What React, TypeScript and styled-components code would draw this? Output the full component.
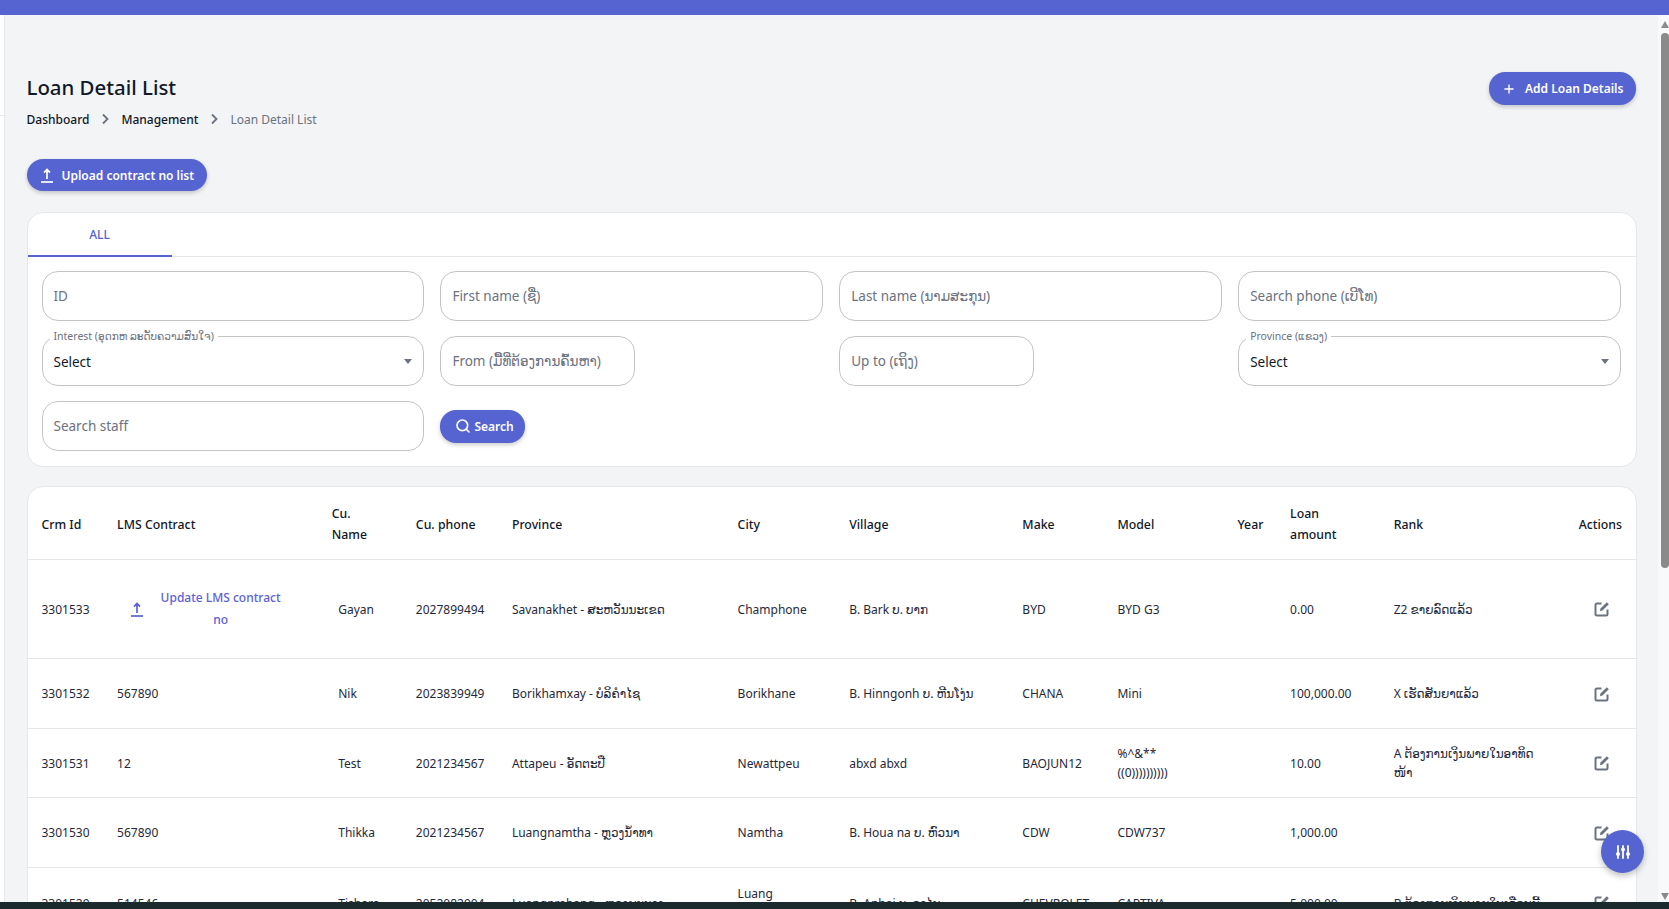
import React from "react";
import styled, { createGlobalStyle } from "styled-components";
import { Search, Plus } from "lucide-react";

const BRAND = "#5564d1";
const FONT = `"Noto Sans", "DejaVu Sans", sans-serif`;

const Global = createGlobalStyle`
  html, body { margin: 0; padding: 0; height: 100%; overflow: hidden; background: #f3f4f6; }
  #root { height: 100%; }
  * { box-sizing: border-box; }
  body { font-family: ${FONT}; color: #111827; }
`;

const Viewport = styled.div`
  width: 1669px; height: 909px; display: flex; flex-direction: column; overflow: hidden; position: relative;
`;
const TopBar = styled.div`height: 15px; background: ${BRAND}; flex: none;`;
const Middle = styled.div`flex: 1; min-height: 0; display: flex;`;
const Rail = styled.div`
  width: 5px; flex: none; background: #fff; border-right: 1px solid #e5e7eb; position: relative;
  &::after { content: ""; position: absolute; left: 0; right: 0; top: 100px; height: 1px; background: #e5e7eb; }
`;
const Main = styled.main`
  flex: 1; min-width: 0; overflow: hidden; padding: 57px 21px 0 21.5px; background: #f3f4f6;
`;
const Scrollbar = styled.div`
  width: 11px; flex: none; background: #f8f9fa; display: flex; flex-direction: column; align-items: flex-end; position: relative; padding-top: 18px;
`;
const Thumb = styled.div`width: 8px; height: 535px; background: #8a8a8a; border-radius: 4px;`;
const ArrowUp = styled.div`
  position: absolute; top: 6px; right: 0; width: 0; height: 0;
  border-left: 4px solid transparent; border-right: 4px solid transparent; border-bottom: 7px solid #8a8a8a;
`;
const ArrowDown = styled(ArrowUp)`
  top: auto; bottom: 2px; border-bottom: 0; border-top: 7px solid #8a8a8a;
`;
const BottomBar = styled.div`height: 7px; background: #1b2a2c; flex: none;`;

const Header = styled.div`display: flex; justify-content: space-between; align-items: flex-start;`;
const Title = styled.h1`margin: 0; font-size: 20.4px; line-height: 30px; font-weight: 500; color: #111827;`;
const Crumbs = styled.nav`display: flex; align-items: center; margin-top: 7px; height: 20px; font-size: 12px;`;
const Crumb = styled.span<{ $muted?: boolean }>`color: ${(p) => (p.$muted ? "#6b7280" : "#111827")}; font-weight: ${(p) => (p.$muted ? 400 : 500)};`;
const Chevron = styled.svg`width: 12px; height: 12px; margin: 0 10px; color: #6b7280;`;

const Btn = styled.button`
  display: inline-flex; align-items: center; border: 0; background: ${BRAND}; color: #fff; border-radius: 16px;
  font: 600 12px ${FONT}; box-shadow: 0 2px 4px rgba(0,0,0,.2); padding: 0; white-space: nowrap;
`;
const AddBtn = styled(Btn)`width: 147px; height: 33px; padding-left: 13px; gap: 9px; margin-right: 1px;`;
const UploadBtn = styled(Btn)`width: 180px; height: 32px; padding-left: 13px; gap: 8px; margin-top: 30px; display: flex;`;
const SearchBtn = styled(Btn)`width: 85px; height: 33px; padding-left: 15px; gap: 3px; align-self: center;`;

const Card = styled.section`
  background: #fff; border: 1px solid #e5e7eb; border-radius: 16px; overflow: hidden;
`;
const FilterCard = styled(Card)`margin-top: 21px; height: 255px;`;
const Tabs = styled.div`height: 44px; border-bottom: 1px solid #e5e7eb; display: flex;`;
const Tab = styled.div`
  width: 144px; height: 44px; display: flex; align-items: center; justify-content: center; padding-top: 1px;
  border-bottom: 2px solid ${BRAND}; color: ${BRAND}; font-size: 12px; font-weight: 500;
`;
const FilterGrid = styled.div`
  display: grid; grid-template-columns: repeat(4, 1fr); gap: 15px 16px; padding: 14px 15px 15px 14px;
`;
const Input = styled.div<{ $narrow?: boolean }>`
  height: 50px; border: 1px solid #c4c4c4; border-radius: 16px; display: flex; align-items: center; padding: 0 11px;
  font-size: 13.5px; color: #6b7280; background: #fff; width: ${(p) => (p.$narrow ? "195px" : "auto")};
`;
const SelectBox = styled.div`
  height: 50px; border: 1px solid #c4c4c4; border-radius: 16px; display: flex; align-items: center; justify-content: space-between;
  padding: 1px 11px 0; font-size: 13.5px; color: #111827; position: relative;
`;
const FloatLabel = styled.span`
  position: absolute; top: -7px; left: 7px; background: #fff; padding: 0 4px; font-size: 10.5px; line-height: 13px; color: #6b7280;
`;
const Caret = styled.span`
  width: 0; height: 0; border-left: 4.5px solid transparent; border-right: 4.5px solid transparent; border-top: 5px solid #6b7280;
`;

const TableCard = styled(Card)`margin-top: 19px;`;
const Table = styled.table`
  width: 100%; border-collapse: collapse; table-layout: fixed; font-size: 12px;
`;
const Th = styled.th`
  text-align: left; font-weight: 500; font-size: 12.3px; padding: 3px 14px 0; height: 72px; line-height: 21px; border-bottom: 1px solid #e5e7eb; color: #111827;
`;
const ThRight = styled(Th)`text-align: right; padding-left: 0;`;
const Tr = styled.tr<{ $h: number }>`height: ${(p) => p.$h}px;`;
const Td = styled.td`
  padding: 1px 14px 0; border-bottom: 1px solid #e5e7eb; color: #1f2937; line-height: 19px; font-weight: 400;
`;
const NameTd = styled(Td)`padding-left: 20.5px;`;
const ModelTd = styled(Td)`white-space: pre-line;`;
const ActionTd = styled(Td)`padding-right: 0;`;
const EditSvg = styled.svg`width: 16px; height: 16px; display: block; margin-left: 13px; color: #6b7280;`;
const LmsCell = styled.div`display: flex; align-items: center; color: #5b61d6; padding-left: 12.5px; gap: 9.5px;`;
const LmsText = styled.span`text-align: center; font-size: 12px; line-height: 22px; font-weight: 500; width: 135px;`;

const Fab = styled.button`
  position: absolute; left: 1601px; top: 830px; width: 43px; height: 43px; border: 0; border-radius: 50%; background: ${BRAND};
  box-shadow: 0 3px 6px rgba(0,0,0,.25); display: flex; align-items: center; justify-content: center; color: #fff; padding: 0;
`;

const UploadIcon = () => (
  <svg width={14} height={15} viewBox="0 0 14 15" fill="none" stroke="currentColor" strokeWidth="1.7">
    <path d="M7 11V1.5M4 4.6 7 1.4l3 3.2" />
    <path d="M1 14h12" />
  </svg>
);
const EditIcon = () => (
  <EditSvg viewBox="0 0 16 16" fill="none" stroke="currentColor" strokeWidth="2">
    <path d="M7.5 2.5H3a1.5 1.5 0 0 0-1.5 1.5v9A1.5 1.5 0 0 0 3 14.5h9a1.5 1.5 0 0 0 1.5-1.5V8.5" />
    <path d="M6.5 7.6 12.8 1.3l2 2-6.3 6.3-2.6.6z" fill="currentColor" stroke="none" />
  </EditSvg>
);
const TuneIcon = () => (
  <svg width="16" height="16" viewBox="0 0 16 16" fill="none" stroke="currentColor" strokeWidth="1.8" strokeLinecap="round">
    <path d="M3 2v12M8 2v12M13 2v12" />
    <circle cx="3" cy="10" r="2" fill="currentColor" stroke="none" />
    <circle cx="8" cy="5.5" r="2" fill="currentColor" stroke="none" />
    <circle cx="13" cy="10" r="2" fill="currentColor" stroke="none" />
  </svg>
);
const ChevronIcon = () => (
  <Chevron viewBox="0 0 12 12" fill="none" stroke="currentColor" strokeWidth="1.8"><path d="M4 1.5 8.5 6 4 10.5" /></Chevron>
);

const cols = [75.5, 214.5, 84, 96, 225.5, 111.5, 173, 95, 120, 52.5, 103.5, 187, 69];
const rows = [
  { h: 99, id: "3301533", lms: null, name: "Gayan", phone: "2027899494", prov: "Savanakhet - ສະຫວັນນະເຂດ", city: "Champhone", village: "B. Bark ບ. ບາກ", make: "BYD", model: "BYD G3", amt: "0.00", rank: "Z2 ຂາຍລົດແລ້ວ" },
  { h: 70, id: "3301532", lms: "567890", name: "Nik", phone: "2023839949", prov: "Borikhamxay - ບໍລິຄໍາໄຊ", city: "Borikhane", village: "B. Hinngonh ບ. ຫີນໂງ່ນ", make: "CHANA", model: "Mini", amt: "100,000.00", rank: "X ເຮັດສັນຍາແລ້ວ" },
  { h: 69, id: "3301531", lms: "12", name: "Test", phone: "2021234567", prov: "Attapeu - ອັດຕະປື", city: "Newattpeu", village: "abxd abxd", make: "BAOJUN12", model: "%^&**\n((0))))))))))", amt: "10.00", rank: "A ຕ້ອງການເງິນພາຍໃນອາທິດ ໜ້າ" },
  { h: 70, id: "3301530", lms: "567890", name: "Thikka", phone: "2021234567", prov: "Luangnamtha - ຫຼວງນໍ້າທາ", city: "Namtha", village: "B. Houa na ບ. ຫົວນາ", make: "CDW", model: "CDW737", amt: "1,000.00", rank: "" },
  { h: 71, id: "3301529", lms: "514546", name: "Tishara", phone: "2052082904", prov: "Luangprabang - ຫຼວງພະບາງ", city: "Luang Prabang", village: "B. Anhai ບ. ອາໄນ", make: "CHEVROLET", model: "CAPTIVA", amt: "5,000.00", rank: "B ຕ້ອງການເງິນພາຍໃນເດືອນນີ້" },
];

export default function App() {
  return (
    <Viewport>
      <Global />
      <TopBar />
      <Middle>
        <Rail />
        <Main>
          <Header>
            <div>
              <Title>Loan Detail List</Title>
              <Crumbs>
                <Crumb>Dashboard</Crumb>
                <ChevronIcon />
                <Crumb>Management</Crumb>
                <ChevronIcon />
                <Crumb $muted>Loan Detail List</Crumb>
              </Crumbs>
            </div>
            <AddBtn><Plus size={14} strokeWidth={2.4} />Add Loan Details</AddBtn>
          </Header>
          <UploadBtn><UploadIcon />Upload contract no list</UploadBtn>
          <FilterCard>
            <Tabs><Tab>ALL</Tab></Tabs>
            <FilterGrid>
              <Input>ID</Input>
              <Input>First name (ຊື່)</Input>
              <Input>Last name (ນາມສະກຸນ)</Input>
              <Input>Search phone (ເບີໂທ)</Input>
              <SelectBox>
                <FloatLabel>Interest (ອຸດກຫ ລະດັບຄວາມສົນໃຈ)</FloatLabel>
                Select<Caret />
              </SelectBox>
              <Input $narrow>From (ມື້ທີ່ຕ້ອງການຄົ້ນຫາ)</Input>
              <Input $narrow>Up to (ເຖິງ)</Input>
              <SelectBox>
                <FloatLabel>Province (ແຂວງ)</FloatLabel>
                Select<Caret />
              </SelectBox>
              <Input>Search staff</Input>
              <SearchBtn><Search size={16} strokeWidth={2.4} />Search</SearchBtn>
            </FilterGrid>
          </FilterCard>
          <TableCard>
            <Table>
              <colgroup>{cols.map((w, i) => <col key={i} style={{ width: w }} />)}</colgroup>
              <thead>
                <tr>
                  <Th>Crm Id</Th><Th>LMS Contract</Th><Th>Cu. Name</Th><Th>Cu. phone</Th><Th>Province</Th><Th>City</Th><Th>Village</Th>
                  <Th>Make</Th><Th>Model</Th><Th>Year</Th><Th>Loan amount</Th><Th>Rank</Th><ThRight>Actions</ThRight>
                </tr>
              </thead>
              <tbody>
                {rows.map((r) => (
                  <Tr key={r.id} $h={r.h}>
                    <Td>{r.id}</Td>
                    <Td>
                      {r.lms ?? (
                        <LmsCell><UploadIcon /><LmsText>Update LMS contract no</LmsText></LmsCell>
                      )}
                    </Td>
                    <NameTd>{r.name}</NameTd>
                    <Td>{r.phone}</Td>
                    <Td>{r.prov}</Td>
                    <Td>{r.city}</Td>
                    <Td>{r.village}</Td>
                    <Td>{r.make}</Td>
                    <ModelTd>{r.model}</ModelTd>
                    <Td />
                    <Td>{r.amt}</Td>
                    <Td>{r.rank}</Td>
                    <ActionTd><EditIcon /></ActionTd>
                  </Tr>
                ))}
              </tbody>
            </Table>
          </TableCard>
        </Main>
        <Scrollbar><ArrowUp /><Thumb /><ArrowDown /></Scrollbar>
      </Middle>
      <BottomBar />
      <Fab><TuneIcon /></Fab>
    </Viewport>
  );
}
